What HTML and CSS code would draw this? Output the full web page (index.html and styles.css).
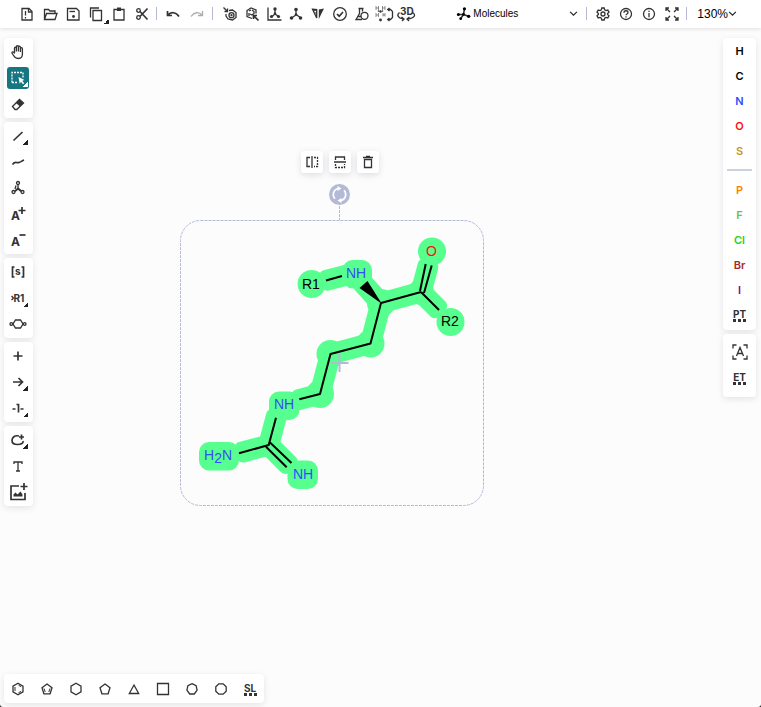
FILE: index.html
```html
<!DOCTYPE html>
<html lang="en">
<head>
<meta charset="utf-8">
<title>Molecule editor</title>
<link rel="stylesheet" href="styles.css">
</head>
<body>
<div class="app">
<header class="topbar">
  <div class="group file">
    <button aria-label="New"><svg viewBox="0 0 16 16"><path d="M3 2.500h7l3 3v8.500H3z"/><path d="M9.500 2.500v3.500h3.500M6.500 5v4.500M6.500 11v1.500" /></svg></button>
    <button aria-label="Open"><svg viewBox="0 0 16 16"><path d="M2.500 13.500v-10h4l1.500 1.500h5v2M2.500 13.500l2-6h10.500l-2 6z"/></svg></button>
    <button aria-label="Save"><svg viewBox="0 0 16 16"><path d="M2.500 2.500h9l2.500 2.500v9h-11.500z"/><path d="M4.500 5.500h5.500"/><circle cx="8.500" cy="10.500" r="1.400" class="solid"/></svg></button>
    <button aria-label="Copy" class="more"><svg viewBox="0 0 16 16"><path d="M5 4.500h8.500v10H5z"/><path d="M2.500 11.500v-9.500h8.500"/></svg></button>
    <button aria-label="Paste"><svg viewBox="0 0 16 16"><path d="M3 3.500h10v10.500H3z"/><path d="M6 1.500h4v3.500h-4z" class="solid"/></svg></button>
    <button aria-label="Cut"><svg viewBox="0 0 16 16"><circle cx="4.500" cy="4.500" r="1.800"/><circle cx="4.500" cy="11.500" r="1.800"/><path d="M6 5.500l7.500 8M6 10.500l7.500-8" class="bold"/></svg></button>
  </div>
  <span class="sep"></span>
  <div class="group history">
    <button aria-label="Undo"><svg viewBox="0 0 16 16"><path d="M2.500 5v4.500h4.500M3 9c3-3.500 8-3 11 1.500" class="bold"/></svg></button>
    <button aria-label="Redo" disabled><svg viewBox="0 0 16 16"><path d="M13.500 5v4.500h-4.500M13 9c-3-3.500-8-3-11 1.500"/></svg></button>
  </div>
  <span class="sep"></span>
  <div class="group tools">
    <button aria-label="Layout"><svg viewBox="0 0 16 16"><path d="M1.500 1.500l4 4M5.500 2.500v3h-3"/><path d="M7 4.500l3.500-.5 3.500 2.500v5l-3.500 2.500-4.500-1-2-3V8"/><circle cx="9.500" cy="9.200" r="2.500"/><circle cx="9.500" cy="9.200" r=".5"/></svg></button>
    <button aria-label="Clean up"><svg viewBox="0 0 16 16"><path d="M8 12.500l-5-2v-6l4-2.500 5 2v3.500M5 5l2-1M5 7v3M8 4l2 1.500v2l-2 1.500-2-1"/><path d="M14.500 14.500l-5-5M9.500 13v-3.500h3.500" class="bold"/></svg></button>
    <button aria-label="Calculate coordinates"><svg viewBox="0 0 16 16"><path d="M2 1.500v12.500h13.500"/><path d="M9 4v4l-3 2.500M9 8l3.500 2.500" /><g class="solid"><circle cx="9" cy="3" r="1.700"/><circle cx="9" cy="7.500" r="1.200"/><circle cx="5.500" cy="10.500" r="1.600"/><circle cx="12.500" cy="10.500" r="1.600"/></g></svg></button>
    <button aria-label="Aromatize"><svg viewBox="0 0 16 16"><path d="M8 4v5l-4.500 3M8 8.500l5 3.500"/><g class="solid"><circle cx="8" cy="3.500" r="1.800"/><circle cx="8" cy="8.500" r="1.300"/><circle cx="3.500" cy="12" r="1.800"/><circle cx="12.500" cy="12" r="1.800"/></g></svg></button>
    <button aria-label="Calculate CIP"><svg viewBox="0 0 16 16"><path d="M8.800 13V3.500L14 2.500z" class="solid"/><path d="M2.500 3.200l4.200.3V12z"/><path d="M3 5l3.500-1M4 7.500l2.500-1M5 9.500l1.500-.5" class="thin"/></svg></button>
    <button aria-label="Check structure"><svg viewBox="0 0 16 16"><circle cx="8" cy="8" r="6.300"/><path d="M5 8l2.200 2.200L11 6" class="bold"/></svg></button>
    <button aria-label="Calculated values"><svg viewBox="0 0 16 16"><path d="M4.500 2.500h5M5.500 2.500v5l-3.500 6h6M8.500 2.500v3M4 10.500h3"/><circle cx="10.500" cy="9.800" r="3.500"/></svg></button>
    <button aria-label="Explicit hydrogens" class="wide"><svg viewBox="0 0 20 16"><g class="faint"><path d="M2 0v4M4.500 0v4M2 2h2.500M8.500 0v4M11 0v4M8.500 2h2.500M2 7v4M4.500 7v4M2 9h2.500M9 7v3.500M11 7v3.500M9 9h2"/></g><g class="solid"><circle cx="6.500" cy="5.500" r="1.200"/><circle cx="4.500" cy="5" r=".8"/><circle cx="8.500" cy="5" r=".8"/><circle cx="6.500" cy="14" r="1.400"/></g><path d="M14 3.500h2.500l2 2v6l-2 2h-2.500M15.500 2l-1.800 1.500 1.800 1.500M15.500 12l-1.800 1.500 1.800 1.500"/></svg></button>
    <button aria-label="3D viewer" class="wide"><svg viewBox="0 0 20 16"><text x="4" y="9" class="glyph g10">3D</text><path d="M3.500 6.500c-3 2.500-2 5.500 4 6.500M16.500 6.500c4 2.500 2 5.500-5 6.500M5.500 11l2.500 2-2 2M13.500 11l-2.500 2 2 2"/></svg></button>
  </div>
  <label class="mode">
    <svg viewBox="0 0 16 16"><path d="M2.500 9h5.500l5.500 2M9 3L8 9l-3 4.500" class="bold"/><g class="solid"><circle cx="9" cy="3" r="1.700"/><circle cx="2.500" cy="9" r="1.600"/><circle cx="8" cy="9" r="1.500"/><circle cx="13.500" cy="11" r="1.800"/><circle cx="5" cy="13.500" r="1.500"/></g></svg>
    <select aria-label="Editor mode"><option>Molecules</option></select>
    <svg class="chev" viewBox="0 0 8 8"><path d="M1 2.500l3 3 3-3"/></svg>
  </label>
  <span class="sep"></span>
  <div class="group app-actions">
    <button aria-label="Settings"><svg viewBox="0 0 16 16"><path d="M6.800 2h2.400l.5 1.900 1.200.7 1.900-.5 1.200 2L12.600 7.500v1L14 9.900l-1.200 2-1.900-.5-1.200.7-.5 1.900H6.800l-.5-1.900-1.200-.7-1.900.5-1.200-2 1.400-1.400v-1L2 6.100l1.200-2 1.900.5 1.200-.7z"/><circle cx="8" cy="8" r="2"/></svg></button>
    <button aria-label="Help"><svg viewBox="0 0 16 16"><circle cx="8" cy="8" r="5.500"/><path d="M6 6.700c0-2.700 4-2.500 4-.2 0 1.300-2 1.500-2 2.800M8 10.300v1.200"/></svg></button>
    <button aria-label="About"><svg viewBox="0 0 16 16"><circle cx="8" cy="8" r="5.500"/><path d="M8 7v4.200M8 4.700v1.200"/></svg></button>
    <button aria-label="Fullscreen"><svg viewBox="0 0 16 16"><path d="M2 5V2h3M2 2l4 4M11 2h3v3M14 2l-4 4M2 11v3h3M2 14l4-4M14 11v3h-3M14 14l-4-4"/></svg></button>
  </div>
  <span class="sep"></span>
  <button class="zoom">130%<svg class="chev" viewBox="0 0 8 8"><path d="M1 2.500l3 3 3-3"/></svg></button>
</header>

<main class="workspace">
  <svg class="canvas" role="img" aria-label="Selected structure">
    <g class="halo">
      <path d="M381 303L421 292M381 303L370.500 343.500 330.500 354 320 394"/>
      <g>
        <rect transform="translate(320.500 282) rotate(-15)" y="-10.500" width="32" height="21" rx="6"/>
        <rect transform="translate(359 279) rotate(48)" y="-10.500" width="30" height="21" rx="6"/>
        <rect transform="translate(421 292) rotate(-75)" y="-10.500" width="33" height="21" rx="6"/>
        <rect transform="translate(421 292) rotate(45)" y="-10.500" width="30" height="21" rx="6"/>
        <rect transform="translate(320 394) rotate(165)" y="-10.500" width="28" height="21" rx="6"/>
        <rect transform="translate(268.700 445) rotate(-75)" y="-10.500" width="36" height="21" rx="6"/>
        <rect transform="translate(268.700 445) rotate(165)" y="-10.500" width="34" height="21" rx="6"/>
        <rect transform="translate(268.700 445) rotate(45)" y="-10.500" width="34" height="21" rx="6"/>
        <circle cx="381" cy="303" r="14"/><circle cx="421" cy="292" r="13"/>
        <circle cx="370.500" cy="343.500" r="14"/><circle cx="330.500" cy="354" r="14"/>
        <circle cx="320" cy="394" r="14"/><circle cx="268.700" cy="445" r="12"/>
        <circle cx="311.600" cy="284" r="14"/><circle cx="432" cy="251.500" r="14"/><circle cx="450.500" cy="322" r="14"/>
        <rect x="342.500" y="260" width="29.500" height="28.500" rx="10"/>
        <rect x="269" y="391.500" width="30.500" height="28.500" rx="10"/>
        <rect x="199" y="442" width="40" height="28.500" rx="10"/>
        <rect x="287.500" y="460.500" width="30.500" height="28.500" rx="10"/>
      </g>
    </g>
    <path class="cross" d="M339.500 354v18M330.500 363h18"/>
    <path class="bonds" d="M326 280.500L342 276M421 292L381 303 370.500 343.500 330.500 354 320 394 299.300 399.300M420 291L425.700 264M424 293L431.700 265.500M421 292L439 310M276 417.700L268.700 445 239 453.300M270 442.500L291.500 463M266 446.700L286.700 467.300"/>
    <path class="wedge" d="M382 304L359.500 288 367.500 281z"/>
    <g class="atoms">
      <text x="302" y="289">R1</text>
      <text x="441" y="326">R2</text>
      <text x="426" y="256" class="o">O</text>
      <g class="n">
        <text x="346" y="278">NH</text>
        <text x="274" y="409">NH</text>
        <text x="293" y="479">NH</text>
        <text x="204" y="460">H<tspan dy="3">2</tspan><tspan dy="-3">N</tspan></text>
      </g>
    </g>
    <rect class="selection" x="180.500" y="220.500" width="303" height="285" rx="20"/>
    <path class="selection" d="M339.500 206v14"/>
    <circle class="handle" cx="339.500" cy="194.500" r="10.500"/>
    <path class="spin" d="M338 188.500a6.200 6.200 0 0 0-3 10.300M341 200.500a6.200 6.200 0 0 0 3-10.300"/>
    <path class="tips" d="M337.500 186l4 2.500-4 2.500zM341.500 203l-4-2.500 4-2.500z"/>
  </svg>

  <div class="float">
    <button aria-label="Flip horizontally"><svg viewBox="0 0 16 16"><path d="M6 3.500H3v9h3M8 2v12"/><path class="dots" d="M10 3.500h3.500v9H10"/></svg></button>
    <button aria-label="Flip vertically"><svg viewBox="0 0 16 16"><path d="M3.500 6V3h9v3M2 8h12"/><path class="dots" d="M3.500 10v3.500h9V10"/></svg></button>
    <button aria-label="Delete"><svg viewBox="0 0 16 16"><path d="M4.500 5.500v8h7v-8z"/><path d="M3 3.500h10M6 2.500h4" class="bold"/></svg></button>
  </div>

  <nav class="left">
    <div class="panel">
      <button aria-label="Hand"><svg viewBox="0 0 16 16"><path d="M4.500 9V4.200c0-1.400 1.900-1.400 1.900 0V7.500M6.400 7V2.700c0-1.400 2-1.400 2 0V7.500M8.400 7V3.200c0-1.400 2-1.400 2 0V8M10.400 8V4.700c0-1.400 2-1.400 2 0V10c0 3-1.500 4.500-4 4.500-3 0-4-1.500-6.500-5.500 0-1.500 1.500-1.500 2.700.5"/></svg></button>
      <button aria-label="Rectangle selection" class="more active"><svg viewBox="0 0 16 16"><path class="dots" d="M2 12.500V2.500h11V8M2 12.500h6"/><path class="solid" d="M8.500 7l6 3-2.300.8 2 2.500-1.200 1-2-2.500-1.300 1.900z"/></svg></button>
      <button aria-label="Erase"><svg viewBox="0 0 16 16"><path d="M2.500 10.500L9.500 3.500 13.500 7 6.800 13.500H5z"/><path class="solid" d="M6 7l3.500-3.500 4 3.500-3.500 3.500z"/></svg></button>
    </div>
    <div class="panel">
      <button aria-label="Single bond" class="more"><svg viewBox="0 0 16 16"><path d="M3.500 12.500l9-8.500" class="bold"/></svg></button>
      <button aria-label="Chain"><svg viewBox="0 0 16 16"><path d="M2.500 10.500c3-4 3.500-1 6.500-2s2.500-1.500 5-2.500" class="bold"/></svg></button>
      <button aria-label="Stereochemistry"><svg viewBox="0 0 16 16"><circle cx="8" cy="3" r="1.500"/><circle cx="3.500" cy="12" r="1.500"/><circle cx="12.500" cy="12" r="1.500"/><path d="M8 4.500V8l-3 3M8 8l3.500 3M5 11.500l3-2.500 3 2.500M6 5.500L5 9"/></svg></button>
      <button aria-label="Charge plus"><svg viewBox="0 0 16 16"><text x="1" y="14" class="glyph g12">A</text><path class="bold" d="M12 1v7M8.500 4.500h7"/></svg></button>
      <button aria-label="Charge minus"><svg viewBox="0 0 16 16"><text x="1" y="14" class="glyph g12">A</text><path class="bold" d="M9.500 3h6"/></svg></button>
    </div>
    <div class="panel">
      <button aria-label="S-group"><svg viewBox="0 0 16 16"><path d="M4.500 3H2.500v10h2M11.500 3h2v10h-2" class="bold"/><text x="5" y="11" class="glyph g10">s</text></svg></button>
      <button aria-label="R-group" class="more"><svg viewBox="0 0 16 16"><path d="M1.500 6l2 2-2 2"/><text x="3.500" y="12" class="glyph g10">R1</text></svg></button>
      <button aria-label="R-group attachment" class="wide"><svg viewBox="0 0 20 16"><path d="M7.500 4h5l2.500 4-2.500 4h-5L5 8z"/><circle cx="3.300" cy="8" r="1.300"/><circle cx="16.700" cy="8" r="1.300"/></svg></button>
    </div>
    <div class="panel">
      <button aria-label="Reaction plus"><svg viewBox="0 0 16 16"><path class="bold" d="M8 3.500v9M3.500 8h9"/></svg></button>
      <button aria-label="Arrow" class="more"><svg viewBox="0 0 16 16"><path class="bold" d="M3 8h9.500M8.500 4l4 4-4 4"/></svg></button>
      <button aria-label="Mapping" class="more"><svg viewBox="0 0 16 16"><path class="bold" d="M2.500 9h3M10.500 9h3M6.500 4.500h2v8"/></svg></button>
    </div>
    <div class="panel">
      <button aria-label="Shapes" class="more"><svg viewBox="0 0 16 16"><path class="bold" d="M9 4C4.500 3 2 5.500 2 8.500c0 2.500 2 4 5.500 4 4 0 6-1.500 5.500-3.500M11.500 2.500v5M9 5h5"/></svg></button>
      <button aria-label="Text"><svg viewBox="0 0 16 16"><path d="M4 6V4h8v2M8 4v9M6 13h4"/></svg></button>
      <button aria-label="Image" class="big"><svg viewBox="0 0 20 20"><path class="bold" d="M11 4H3v13.500h14V11M16 1v7M12.500 4.500h7"/><path class="solid" d="M5.500 14.500v-2l2-2 2 2 3-3 2 3v2z"/></svg></button>
    </div>
  </nav>

  <aside class="right">
    <div class="panel">
      <button>H</button><button>C</button><button class="el-n">N</button><button class="el-o">O</button><button class="el-s">S</button>
      <hr>
      <button class="el-p">P</button><button class="el-f">F</button><button class="el-cl">Cl</button><button class="el-br">Br</button><button class="el-i">I</button>
      <button class="table">PT</button>
    </div>
    <div class="panel extra">
      <button aria-label="Any atom"><svg viewBox="0 0 16 16"><path d="M1 4.500V1h3.500M11.500 1H15v3.500M1 11.500V15h3.500M11.500 15H15v-3.500M4.500 12L8 3.500l3.500 8.500M5.500 9.500h5"/></svg></button>
      <button class="table">ET</button>
    </div>
  </aside>

  <nav class="bottom panel">
    <button aria-label="Benzene"><svg viewBox="0 0 16 16"><path d="M8 2.200l5 2.900v5.800l-5 2.900-5-2.900V5.100z"/><path class="thin" d="M5 6v4M8.500 4.200l2.700 1.500M8.500 11.800l2.700-1.500"/></svg></button>
    <button aria-label="Cyclopentadiene"><svg viewBox="0 0 16 16"><path d="M8 3l5 3.700-1.900 6.100H4.900L3 6.700z"/><path class="thin" d="M5 7.500l1.200 3.500M11 7.500L9.800 11"/></svg></button>
    <button aria-label="Cyclohexane"><svg viewBox="0 0 16 16"><path d="M8 2.200l5 2.900v5.800l-5 2.900-5-2.900V5.100z"/></svg></button>
    <button aria-label="Cyclopentane"><svg viewBox="0 0 16 16"><path d="M8 3l5 3.700-1.900 6.100H4.900L3 6.700z"/></svg></button>
    <button aria-label="Cyclopropane"><svg viewBox="0 0 16 16"><path d="M8 4l4.700 8.500H3.300z"/></svg></button>
    <button aria-label="Cyclobutane"><svg viewBox="0 0 16 16"><path d="M2.500 2.500h11v11h-11z"/></svg></button>
    <button aria-label="Cycloheptane"><svg viewBox="0 0 16 16"><path d="M8 2.700l4.100 2 1 4.400-2.800 3.900H5.700L2.900 9.100l1-4.400z"/></svg></button>
    <button aria-label="Cyclooctane"><svg viewBox="0 0 16 16"><path d="M5.800 2.800h4.400l3 3v4.400l-3 3H5.800l-3-3V5.800z"/></svg></button>
    <button class="table">SL</button>
  </nav>
</main>
</div>
</body>
</html>
```
FILE: styles.css
```css
* { box-sizing: border-box; }
html { background: #222; }
body { margin: 0; font-family: Inter, "Liberation Sans", sans-serif; color: #000; }
.app {
  display: flex;
  flex-direction: column;
  min-height: 100vh;
  background: #fcfcfc;
  border-radius: 0 0 3px 3px;
  overflow: hidden;
}
button {
  display: flex;
  align-items: center;
  justify-content: center;
  position: relative;
  padding: 0;
  border: 0;
  border-radius: 3px;
  background: none;
  color: #333;
  font: inherit;
}
svg { flex: none; width: 16px; height: 16px; fill: none; stroke: #333; stroke-width: 1.3; }
.wide svg { width: 20px; }
.big svg { width: 20px; height: 20px; }
.solid { fill: currentColor; stroke: none; }
.bold { stroke-width: 1.7; }
.thin { stroke-width: 1; }
.faint { stroke-width: 1; opacity: .55; }
.dots { stroke-dasharray: 2 1; }
.glyph { fill: #333; stroke: none; font-weight: 700; }
.g10 { font-size: 10px; }
.g12 { font-size: 12px; }
.more::after {
  content: "";
  position: absolute;
  width: 5px;
  height: 5px;
  background: linear-gradient(135deg, transparent 50%, #222 50%);
}

.topbar {
  display: flex;
  align-items: center;
  height: 28px;
  padding: 0 24px 1px 15px;
  background: #fff;
  box-shadow: 0 1px 4px rgba(0, 0, 0, .12);
  z-index: 1;
}
.group { display: flex; }
.group button { height: 22px; }
.file button, .app-actions button { width: 23px; }
.history button { width: 24px; }
.tools button { width: 22px; }
.file .more::after { right: -2px; bottom: 1px; }
.topbar button:disabled { opacity: .4; }
.sep { width: 1px; height: 13px; margin: 0 4px 0 3px; background: #b4b9d6; }
.history + .sep { margin-right: 6px; }
.mode { display: flex; align-items: center; width: 122px; margin-left: auto; }
.mode svg { width: 15px; height: 15px; }
.mode select {
  flex: 1;
  min-width: 0;
  margin-left: 2px;
  padding: 0;
  border: 0;
  background: none;
  appearance: none;
  color: #000;
  font: 10px "Liberation Sans", sans-serif;
}
.topbar .chev { width: 9px; height: 9px; stroke: #222; stroke-width: 1; }
.mode + .sep { margin-left: 8px; }
.zoom { margin-left: 6px; color: #000; font: 12px "Liberation Sans", sans-serif; }

.workspace {
  flex: 1;
  display: grid;
  grid-template: 1fr auto / auto 1fr auto;
  position: relative;
  padding: 10px 5px 4px 4px;
}
.panel {
  display: flex;
  flex-direction: column;
  align-items: center;
  padding: 1px 0;
  border-radius: 4px;
  background: #fff;
  box-shadow: 0 2px 6px rgba(103, 104, 132, .16);
}
.left, .right { display: flex; flex-direction: column; align-self: start; position: relative; gap: 4px; }
.left { width: 29px; grid-column: 1; }
.left .panel { padding-right: 2px; }
.left button { width: 24px; height: 26px; }
.left .more::after { bottom: 4px; right: 2px; }
.left .active { width: 22px; height: 22px; margin: 2px 0; background: #167782; color: #fff; }
.active svg { stroke: #fff; }
.left .active::after { bottom: 2px; right: 1px; background: linear-gradient(135deg, transparent 50%, #fff 50%); }

.right { width: 33px; grid-column: 3; }
.right button { width: 28px; height: 25px; color: #000; font-size: 11px; font-weight: 600; }
.right hr { width: 25px; height: 2px; margin: 6px 0; border: 0; background: #cad3dd; }
.right .panel:first-child { padding: 0 0 3px; }
.right .extra { padding: 5px 0 6px; }
.right .extra button { height: 26px; }
.right .el-n { color: #304ff7; }
.right .el-o { color: #ff0d0d; }
.right .el-s { color: #c19a1c; }
.right .el-p { color: #ff8000; }
.right .el-f { color: #78bc42; }
.right .el-cl { color: #1fd01f; }
.right .el-br { color: #a62929; }
.right .el-i { color: #940094; }
button.table, .right .table {
  flex-direction: column;
  padding-top: 1px;
  color: #333;
  font-size: 10px;
  font-weight: 700;
  line-height: 10px;
}
.table::after {
  content: "";
  flex: none;
  width: 13px;
  height: 3px;
  background: repeating-linear-gradient(90deg, #333 0 3px, transparent 3px 5px);
}

.bottom {
  grid-row: 2;
  grid-column: 1 / 3;
  justify-self: start;
  flex-direction: row;
  position: relative;
  gap: 1px;
  padding: 0;
}
.bottom button { width: 28px; height: 29px; }

.canvas { position: absolute; left: 0; top: -28px; width: 100%; height: calc(100% + 28px); }
.halo { fill: #57ff8f; stroke: none; }
.halo > path { fill: none; stroke: #57ff8f; stroke-width: 21; }
.cross { stroke: #b4b9d6; stroke-width: 2; }
.bonds { stroke: #000; stroke-width: 2; stroke-linejoin: round; }
.wedge { fill: #000; stroke: none; }
.atoms { fill: #000; stroke: none; font: 14px "Liberation Sans", sans-serif; }
.n { fill: #304ff7; }
.o { fill: #ff0d0d; }
.selection { stroke: #b4b9d6; stroke-width: 1; stroke-dasharray: 3 1; }
.handle { fill: #b4b9d6; stroke: none; }
.spin { stroke: #fff; stroke-width: 1.6; }
.tips { fill: #fff; stroke: none; }
.float { display: flex; position: absolute; left: 301px; top: 123px; gap: 6px; }
.float button { width: 22px; height: 22px; background: #fff; box-shadow: 0 2px 6px rgba(103, 104, 132, .2); }
```
